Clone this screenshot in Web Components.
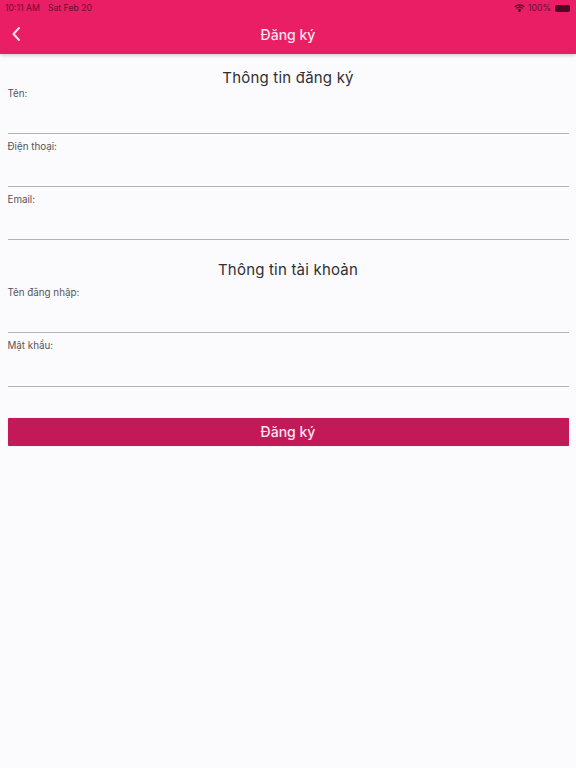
<!DOCTYPE html>
<html lang="vi">
<head>
<meta charset="utf-8">
<title>Đăng ký</title>
<style>
  html, body { margin: 0; height: 100%; }
  body { background: #fbfafd; font-family: Inter, "Noto Sans", sans-serif; }
</style>
</head>
<body>
<template id="status-bar">
  <style>
    :host { display: flex; align-items: center; justify-content: space-between; height: 14px; padding: 1px 6px 0 5px; font-size: 8.7px; color: #6e0d35; }
    .left, .right { display: flex; align-items: center; }
    .left { gap: 8px; }
    .right { gap: 3px; }
    svg { display: block; }
    .battery { width: 15px; height: 7px; background: #4a0a26; border-radius: 2px; margin-left: 1px; }
  </style>
  <div class="left"><span>10:11 AM</span><span>Sat Feb 20</span></div>
  <div class="right">
    <svg width="11" height="8" viewBox="0 0 11 8" fill="none" stroke="#5a0b2d" stroke-width="1.3">
      <path d="M.7 2.7a7 7 0 0 1 9.6 0"/>
      <path d="M2.4 4.4a4.6 4.6 0 0 1 6.2 0"/>
      <path d="M4.1 6a2.1 2.1 0 0 1 2.8 0"/>
      <circle cx="5.5" cy="7.1" r=".5" fill="#5a0b2d"/>
    </svg>
    <span>100%</span>
    <div class="battery"></div>
  </div>
</template>

<template id="app-bar">
  <style>
    :host { display: block; height: 54px; box-sizing: border-box; background: #ea1e64; box-shadow: 0 1px 4px rgba(0,0,0,.22); position: relative; }
    .row { display: grid; grid-template-columns: 48px 1fr 48px; align-items: center; height: 30px; margin-top: 4px; }
    .back { display: flex; padding-left: 11px; }
    h1 { margin: 0; text-align: center; font-size: 14px; font-weight: 500; color: #fde4ee; }
  </style>
  <status-bar></status-bar>
  <div class="row">
    <div class="back">
      <svg width="10" height="16" viewBox="0 0 10 16" fill="none" stroke="#fde4ee" stroke-width="2" stroke-linecap="round" stroke-linejoin="round">
        <path d="M8 2 2.5 8 8 14"/>
      </svg>
    </div>
    <h1><slot></slot></h1>
    <div></div>
  </div>
</template>

<template id="form-section">
  <style>
    :host { display: block; }
    h2 { margin: 0 0 var(--heading-gap, 0); height: 20px; line-height: 20px; text-align: center; font-size: 15px; font-weight: 400; letter-spacing: .2px; color: #303034; }
  </style>
  <h2></h2>
  <slot></slot>
</template>

<template id="text-field">
  <style>
    :host { display: block; height: 53.2px; box-sizing: border-box; padding-top: 7px; border-bottom: 1px solid #b4b3b7; }
    label { display: block; font-size: 9.8px; line-height: 12px; color: #55555a; }
    input { display: block; width: 100%; box-sizing: border-box; height: 28px; padding: 0; border: 0; outline: 0; background: transparent; font: inherit; }
  </style>
  <label for="f"></label>
  <input id="f">
</template>

<template id="submit-button">
  <style>
    :host { display: block; margin-top: 31.4px; }
    button { display: block; width: 100%; height: 28px; padding: 0; border: 0; border-radius: 1px; background: #c21a58; color: #fbe6ee; font-family: inherit; font-size: 14px; font-weight: 500; box-shadow: 0 0 1px rgba(0,0,0,.3); }
  </style>
  <button><slot></slot></button>
</template>

<template id="register-page">
  <style>
    :host { display: block; }
    main { display: flex; flex-direction: column; padding: 14px 7.5px 0; }
    .first { --heading-gap: -7.4px; }
    form-section + form-section { margin-top: 20px; }
  </style>
  <app-bar>Đăng ký</app-bar>
  <main>
    <form-section class="first" heading="Thông tin đăng ký">
      <text-field label="Tên:"></text-field>
      <text-field label="Điện thoại:"></text-field>
      <text-field label="Email:"></text-field>
    </form-section>
    <form-section heading="Thông tin tài khoản">
      <text-field label="Tên đăng nhập:"></text-field>
      <text-field label="Mật khẩu:"></text-field>
    </form-section>
    <submit-button>Đăng ký</submit-button>
  </main>
</template>

<register-page></register-page>

<script>
  // plain elements: clone the template with the same id as the tag
  class Base extends HTMLElement {
    constructor() {
      super();
      this.attachShadow({mode: 'open'}).appendChild(document.getElementById(this.localName).content.cloneNode(true));
    }
  }
  class FormSection extends Base {
    connectedCallback() {
      this.shadowRoot.querySelector('h2').textContent = this.getAttribute('heading');
    }
  }
  class TextField extends Base {
    connectedCallback() {
      this.shadowRoot.querySelector('label').textContent = this.getAttribute('label');
    }
  }
  ['status-bar', 'app-bar', 'submit-button', 'register-page'].forEach(function(name) {
    customElements.define(name, class extends Base {});
  });
  customElements.define('form-section', FormSection);
  customElements.define('text-field', TextField);
</script>
</body>
</html>
